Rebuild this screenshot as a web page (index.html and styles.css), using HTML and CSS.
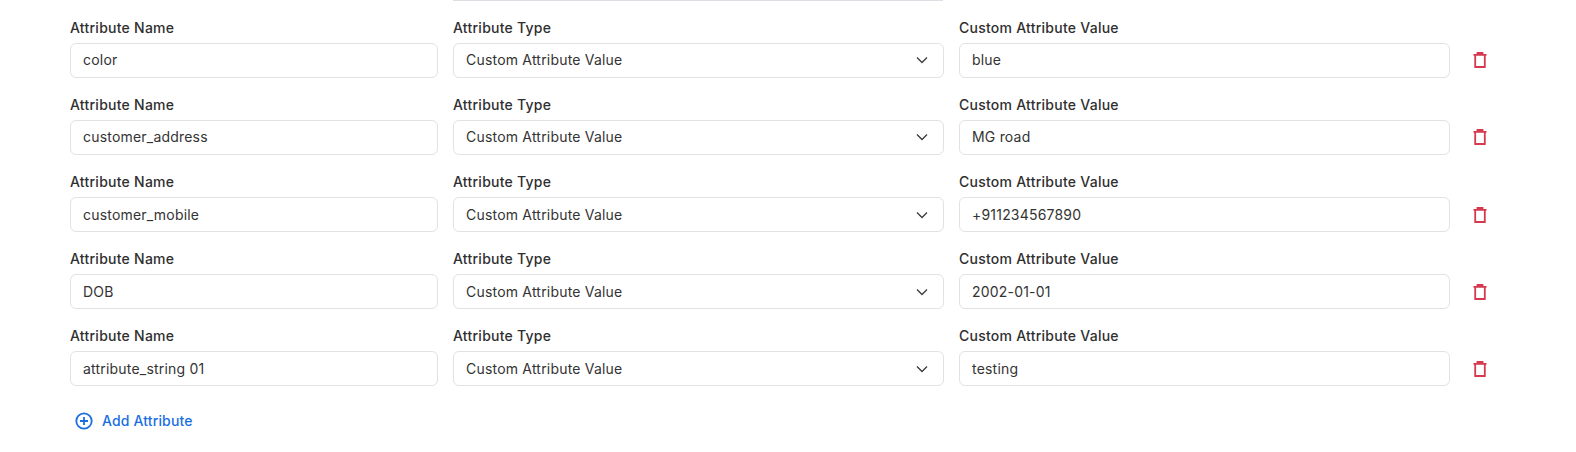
FILE: index.html
```html
<!DOCTYPE html>
<html lang="en">
<head>
<meta charset="utf-8">
<title>Attributes</title>
<link rel="stylesheet" href="styles.css">
</head>
<body>
<main class="form">
  <div class="sliver-row"><div class="sliver"></div></div>
  <div class="row">
    <div class="field"><label class="label">Attribute Name</label><div class="input">color</div></div>
    <div class="field"><label class="label">Attribute Type</label><div class="input select">Custom Attribute Value<svg class="chev" viewBox="0 0 12 8"><path d="M1 1.5l5 5 5-5"/></svg></div></div>
    <div class="field"><label class="label">Custom Attribute Value</label><div class="input">blue</div></div>
    <button class="del"><svg viewBox="0 0 14 16"><path d="M0.5 2.8h13M4.5 2.8V1h5v1.8M2.2 2.8V15h9.6V2.8"/></svg></button>
  </div>
  <div class="row">
    <div class="field"><label class="label">Attribute Name</label><div class="input">customer_address</div></div>
    <div class="field"><label class="label">Attribute Type</label><div class="input select">Custom Attribute Value<svg class="chev" viewBox="0 0 12 8"><path d="M1 1.5l5 5 5-5"/></svg></div></div>
    <div class="field"><label class="label">Custom Attribute Value</label><div class="input">MG road</div></div>
    <button class="del"><svg viewBox="0 0 14 16"><path d="M0.5 2.8h13M4.5 2.8V1h5v1.8M2.2 2.8V15h9.6V2.8"/></svg></button>
  </div>
  <div class="row">
    <div class="field"><label class="label">Attribute Name</label><div class="input">customer_mobile</div></div>
    <div class="field"><label class="label">Attribute Type</label><div class="input select">Custom Attribute Value<svg class="chev" viewBox="0 0 12 8"><path d="M1 1.5l5 5 5-5"/></svg></div></div>
    <div class="field"><label class="label">Custom Attribute Value</label><div class="input">+911234567890</div></div>
    <button class="del"><svg viewBox="0 0 14 16"><path d="M0.5 2.8h13M4.5 2.8V1h5v1.8M2.2 2.8V15h9.6V2.8"/></svg></button>
  </div>
  <div class="row">
    <div class="field"><label class="label">Attribute Name</label><div class="input">DOB</div></div>
    <div class="field"><label class="label">Attribute Type</label><div class="input select">Custom Attribute Value<svg class="chev" viewBox="0 0 12 8"><path d="M1 1.5l5 5 5-5"/></svg></div></div>
    <div class="field"><label class="label">Custom Attribute Value</label><div class="input">2002-01-01</div></div>
    <button class="del"><svg viewBox="0 0 14 16"><path d="M0.5 2.8h13M4.5 2.8V1h5v1.8M2.2 2.8V15h9.6V2.8"/></svg></button>
  </div>
  <div class="row">
    <div class="field"><label class="label">Attribute Name</label><div class="input">attribute_string 01</div></div>
    <div class="field"><label class="label">Attribute Type</label><div class="input select">Custom Attribute Value<svg class="chev" viewBox="0 0 12 8"><path d="M1 1.5l5 5 5-5"/></svg></div></div>
    <div class="field"><label class="label">Custom Attribute Value</label><div class="input">testing</div></div>
    <button class="del"><svg viewBox="0 0 14 16"><path d="M0.5 2.8h13M4.5 2.8V1h5v1.8M2.2 2.8V15h9.6V2.8"/></svg></button>
  </div>
  <button class="add"><svg viewBox="0 0 18 18"><circle cx="9" cy="9" r="7.7"/><path d="M9 5v8M5 9h8"/></svg>Add Attribute</button>
</main>
</body>
</html>
```
FILE: styles.css
```css
* { box-sizing: border-box; }
html, body { margin: 0; height: 452px; background: #fff; overflow: hidden; }
body { font-family: Inter, "Noto Sans", sans-serif; color: #2b2b2b; }
.form { padding-left: 70px; display: flex; flex-direction: column; }
.sliver-row { display: flex; height: 1px; padding-left: 383px; }
.sliver { width: 490px; border-bottom: 1px solid #dcdfe3; }
.row { display: grid; grid-template-columns: 367.5px 490.5px 491px 60px; column-gap: 15.5px; height: 77.2px; padding-top: 16.7px; }
.field { display: flex; flex-direction: column; gap: 6px; }
.label { font-size: 14px; line-height: 19px; font-weight: 500; letter-spacing: .25px; color: #2f2f2f; }
.input { height: 35px; border: 1px solid #e0e2e5; border-radius: 6px; padding: 0 12px 1px; font-size: 14px; letter-spacing: .2px; line-height: 33px; color: #333; background: #fff; display: flex; align-items: center; justify-content: space-between; }
.chev { width: 12px; height: 8px; margin: 1px 3px 0 0; fill: none; stroke: #3a3a3a; stroke-width: 1.25; }
.del { border: 0; background: none; padding: 0; margin-top: 25px; height: 35px; width: 14px; margin-left: 7px; display: flex; align-items: center; }
.del svg { width: 14px; height: 16px; fill: none; stroke: #d5394f; stroke-width: 1.8; }
.add { border: 0; background: none; display: flex; align-items: center; gap: 9px; padding: 0; margin: 25.3px 0 0 5px; font: 500 14px/18px Inter, "Noto Sans", sans-serif; letter-spacing: .15px; color: #1a6fe0; }
.add svg { width: 18px; height: 18px; fill: none; stroke: #1a6fe0; stroke-width: 1.8; }
```
